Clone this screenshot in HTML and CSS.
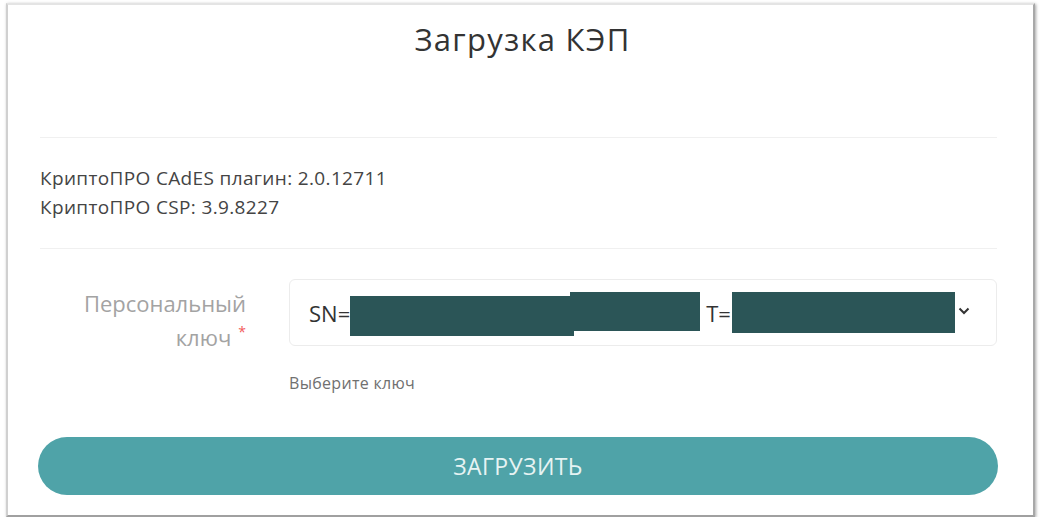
FILE: index.html
```html
<!DOCTYPE html>
<html lang="ru">
<head>
<meta charset="utf-8">
<title>Загрузка КЭП</title>
<link rel="stylesheet" href="styles.css">
</head>
<body>
<div class="frame">
  <h1 class="title">Загрузка КЭП</h1>
  <hr class="divider divider-top">
  <div class="info">
    <p>КриптоПРО CAdES плагин: 2.0.12711</p>
    <p>КриптоПРО CSP: 3.9.8227</p>
  </div>
  <hr class="divider">
  <div class="form-row">
    <label class="label"><span class="lline">Персональный</span><span class="lline"><span>ключ</span><span class="req">*</span></span></label>
    <div class="field">
      <div class="select">
        <span class="sel-text">SN=</span>
        <span class="redact r1"></span><span class="redact r2"></span>
        <span class="sel-text t">T=</span>
        <span class="redact r3"></span>
        <svg class="chevron" width="12" height="8" viewBox="0 0 12 8"><path d="M1.5 1.5 L6 6 L10.5 1.5" fill="none" stroke="#333" stroke-width="2"/></svg>
      </div>
      <div class="help">Выберите ключ</div>
    </div>
  </div>
  <button class="btn">ЗАГРУЗИТЬ</button>
</div>
</body>
</html>
```

FILE: styles.css
```css
html, body {
  margin: 0;
  padding: 0;
  background: #ffffff;
}
body {
  font-family: "Open Sans", "Noto Sans", sans-serif;
  color: #333;
}
.frame {
  box-sizing: border-box;
  width: 1029px;
  height: 514px;
  margin: 3px 0 0 6px;
  border-top: 2px solid #e4e4e4;
  border-left: 2px solid #d0d0d0;
  border-right: 2px solid #a8a8a8;
  border-bottom: 2px solid #a0a0a0;
  box-shadow: 1px 1px 3px rgba(0,0,0,0.35);
  padding: 0 37px 0 32px;
  display: flex;
  flex-direction: column;
}
.title {
  margin: 12px 0 0;
  padding-left: 9px;
  font-weight: 400;
  font-size: 31px;
  letter-spacing: 1.3px;
  line-height: 44px;
  text-align: center;
  color: #333;
}
.divider {
  border: 0;
  border-top: 1px solid #f0f0f0;
  margin: 0;
  width: 957px;
}
.divider-top {
  margin-top: 76px;
}
.info {
  padding: 26px 0 26px;
  font-size: 19px;
  letter-spacing: 0.35px;
  color: #444;
}
.info p {
  margin: 0;
  line-height: 29px;
}
.form-row {
  display: grid;
  grid-template-columns: 209px 708px;
  column-gap: 40px;
  margin-top: 30px;
}
.label {
  text-align: right;
  font-size: 22px;
  line-height: 34px;
  color: #a3a3a3;
  padding: 7px 3px 0 0;
}
.lline {
  display: block;
}
.req {
  display: inline-block;
  color: #f25a5a;
  font-size: 14px;
  line-height: 14px;
  vertical-align: 9px;
  margin-left: 7px;
}
.select {
  box-sizing: border-box;
  height: 67px;
  border: 1px solid #ececec;
  border-radius: 6px;
  display: flex;
  align-items: center;
  padding: 0 20px 0 19px;
}
.sel-text {
  font-size: 22px;
  color: #333;
}
.t {
  margin-left: 6px;
}
.redact {
  display: inline-block;
  background: #2b5557;
}
.r1 {
  width: 224px;
  height: 40px;
  margin-top: 6px;
}
.r2 {
  width: 130px;
  height: 39px;
  margin-top: -2px;
  margin-left: -4px;
}
.r3 {
  width: 223px;
  height: 41px;
  margin-left: 1px;
}
.chevron {
  margin-left: 3px;
  margin-top: -4px;
}
.help {
  margin-top: 26px;
  font-size: 16px;
  letter-spacing: 0.3px;
  color: #707070;
}
.btn {
  margin: 43px 0 0 -2px;
  width: 960px;
  height: 58px;
  border: 0;
  border-radius: 29px;
  background: #4fa3a8;
  color: #e6f3f3;
  font-family: "Open Sans", "Noto Sans", sans-serif;
  font-size: 23px;
  letter-spacing: 0.4px;
}
```
